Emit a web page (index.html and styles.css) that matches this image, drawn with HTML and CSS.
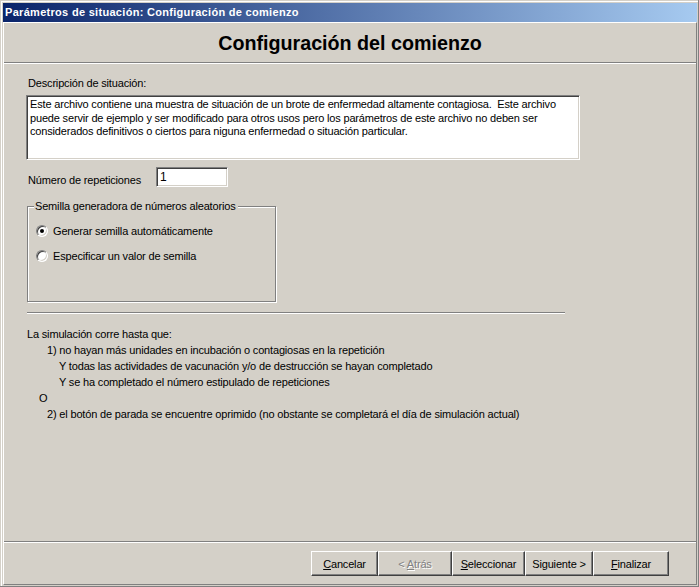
FILE: index.html
```html
<!DOCTYPE html>
<html lang="es">
<head>
<meta charset="utf-8">
<title>Parámetros de situación</title>
<link rel="stylesheet" href="styles.css">
</head>
<body>
<div class="window">
  <div class="titlebar">Parámetros de situación: Configuración de comienzo</div>
  <div class="client">
    <div class="header"><h1>Configuración del comienzo</h1></div>
    <div class="content">
      <div class="desc-label">Descripción de situación:</div>
      <div class="textarea">Este archivo contiene una muestra de situación de un brote de enfermedad altamente contagiosa.&nbsp; Este archivo<br>puede servir de ejemplo y ser modificado para otros usos pero los parámetros de este archivo no deben ser<br>considerados definitivos o ciertos para niguna enfermedad o situación particular.</div>
      <div class="reps">
        <span class="reps-label">Número de repeticiones</span>
        <div class="input">1</div>
      </div>
      <div class="group">
        <span class="legend">Semilla generadora de números aleatorios</span>
        <div class="radio-row first"><span class="radio checked"></span><span>Generar semilla automáticamente</span></div>
        <div class="radio-row"><span class="radio"></span><span>Especificar un valor de semilla</span></div>
      </div>
      <div class="hr"></div>
      <div class="sim">
        <div>La simulación corre hasta que:</div>
        <div class="ind1">1) no hayan más unidades en incubación o contagiosas en la repetición</div>
        <div class="ind2">Y todas las actividades de vacunación y/o de destrucción se hayan completado</div>
        <div class="ind2">Y se ha completado el número estipulado de repeticiones</div>
        <div class="ind0">O</div>
        <div class="ind1">2) el botón de parada se encuentre oprimido (no obstante se completará el día de simulación actual)</div>
      </div>
    </div>
    <div class="buttons">
      <button class="btn w-cancel"><u>C</u>ancelar</button>
      <button class="btn w-back disabled">&lt; <u>A</u>trás</button>
      <button class="btn w-select"><u>S</u>eleccionar</button>
      <button class="btn w-next">Si<u>g</u>uiente &gt;</button>
      <button class="btn w-finish"><u>F</u>inalizar</button>
    </div>
  </div>
</div>
</body>
</html>
```

FILE: styles.css
```css
* { box-sizing: border-box; }
html, body { margin: 0; padding: 0; background: #d4d0c8; }
body {
  font-family: "Liberation Sans", Arial, sans-serif;
  font-size: 11px;
  letter-spacing: -0.17px;
  color: #000;
}
.window {
  width: 699px;
  height: 587px;
  background: #d4d0c8;
  border-style: solid;
  border-width: 0 1px 1px 0;
  border-color: #808080;
  box-shadow: inset 1px 1px 0 #d4d0c8, inset 2px 2px 0 #fff;
  padding: 3px 1px 1px 3px;
  display: flex;
  flex-direction: column;
}
.titlebar {
  height: 19px;
  flex: none;
  background: linear-gradient(to right, #0a246a, #a6caf0);
  color: #fff;
  font-weight: bold;
  font-size: 11px;
  letter-spacing: 0.3px;
  line-height: 19px;
  padding-left: 2px;
  white-space: nowrap;
}
.client {
  flex: 1;
  display: flex;
  flex-direction: column;
  border-top: 1px solid #fff;
  border-left: 1px solid #fff;
  border-right: 1px solid #808080;
  border-bottom: 1px solid #808080;
}
.header {
  height: 40px;
  flex: none;
  border-bottom: 1px solid #808080;
  text-align: center;
}
.header h1 {
  margin: 0;
  font-size: 19.7px;
  letter-spacing: 0;
  font-weight: bold;
  line-height: 39px;
  padding-top: 1px;
}
.content {
  flex: 1;
  border-top: 1px solid #fff;
  border-bottom: 1px solid #808080;
  padding: 13px 0 0 22px;
}
.desc-label {
  line-height: 13px;
  margin-left: 2px;
}
.textarea {
  margin-top: 5px;
  width: 554px;
  height: 65px;
  background: #fff;
  border: 1px solid;
  border-color: #808080 #fff #fff #808080;
  box-shadow: inset 1px 1px 0 #404040, inset -1px -1px 0 #d4d0c8;
  padding: 2px 3px;
  line-height: 13.7px;
  white-space: nowrap;
}
.reps {
  display: flex;
  align-items: center;
  margin-top: 7px;
  margin-left: 2px;
}
.reps-label {
  width: 128px;
  padding-top: 5px;
}
.input {
  width: 72px;
  height: 20px;
  background: #fff;
  border: 1px solid;
  border-color: #808080 #fff #fff #808080;
  box-shadow: inset 1px 1px 0 #404040, inset -1px -1px 0 #d4d0c8;
  padding: 1px 0 0 3px;
  font-size: 12px;
  line-height: 16px;
}
.group {
  position: relative;
  margin-top: 19px;
  margin-left: 1px;
  width: 249px;
  height: 96px;
  border: 1px solid #808080;
  box-shadow: inset 1px 1px 0 #fff, 1px 1px 0 #fff;
  padding-top: 17px;
  padding-left: 8px;
}
.legend {
  position: absolute;
  left: 6px;
  top: -7px;
  background: #d4d0c8;
  padding: 0 2px 0 1px;
  line-height: 13px;
}
.radio-row {
  display: flex;
  align-items: center;
  height: 13px;
  margin-bottom: 12px;
}
.radio {
  width: 12px;
  height: 12px;
  border-radius: 50%;
  background: #fff;
  border: 1px solid;
  border-color: #808080 #fff #fff #808080;
  box-shadow: inset 1px 1px 0 #404040, inset -1px -1px 0 #d4d0c8;
  margin-right: 5px;
  display: flex;
  align-items: center;
  justify-content: center;
  flex: none;
}
.radio.checked::after {
  content: "";
  width: 4px;
  height: 4px;
  border-radius: 50%;
  background: #000;
}
.hr {
  margin-top: 10px;
  margin-left: 1px;
  width: 538px;
  height: 2px;
  border-top: 1px solid #808080;
  border-bottom: 1px solid #fff;
}
.sim {
  margin-top: 12px;
  margin-left: 1px;
  line-height: 16px;
  white-space: nowrap;
}
.ind0 { padding-left: 12px; }
.ind1 { padding-left: 20px; }
.ind2 { padding-left: 32px; }
.buttons {
  height: 42px;
  flex: none;
  border-top: 1px solid #fff;
  display: flex;
  justify-content: flex-end;
  align-items: flex-start;
  padding: 8px 27px 0 0;
}
.btn {
  height: 25px;
  font-family: "Liberation Sans", Arial, sans-serif;
  font-size: 11px;
  letter-spacing: -0.17px;
  color: #000;
  background: #d4d0c8;
  border: 1px solid;
  border-color: #fff #404040 #404040 #fff;
  box-shadow: inset -1px -1px 0 #808080;
  padding: 0;
  margin: 0;
}
.btn.disabled {
  color: #808080;
  text-shadow: 1px 1px 0 #fff;
}
.w-cancel { width: 67px; }
.w-back { width: 74px; }
.w-select { width: 73px; }
.w-next { width: 68px; }
.w-finish { width: 76px; }
```
